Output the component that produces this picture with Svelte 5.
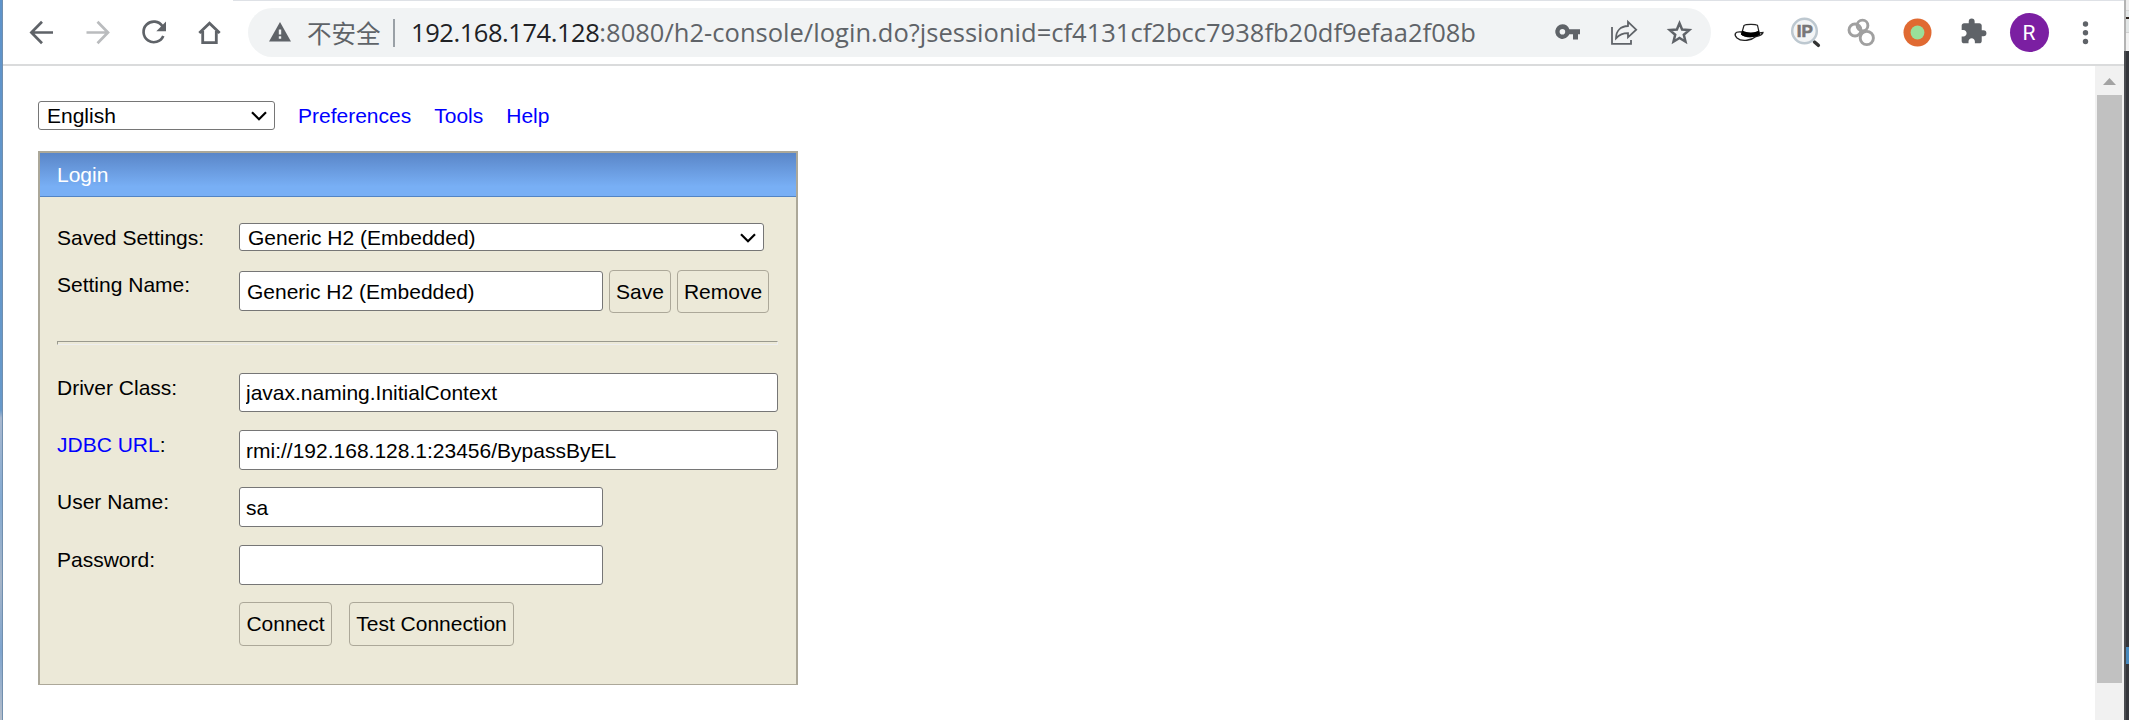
<script>
  let language = $state('English');
  let saved = $state('Generic H2 (Embedded)');
  let settingName = $state('Generic H2 (Embedded)');
  let driver = $state('javax.naming.InitialContext');
  let url = $state('rmi://192.168.128.1:23456/BypassByEL');
  let user = $state('sa');
  let password = $state('');
</script>

{#snippet chevron()}
  <svg class="chevron" width="16" height="10" viewBox="0 0 16 10"><path d="M1 1.2 8 8.2 15 1.2" fill="none" stroke="#000" stroke-width="2.2" /></svg>
{/snippet}

<div class="screen">
  <div class="edge-left"></div>
  <div class="window">
    <header class="toolbar">
      <div class="tab-line"></div>
      <svg class="cell" viewBox="0 0 56 64"><path d="M39 32.5H18M28 21.8 17.4 32.5 28 43.2" fill="none" stroke="#5f6368" stroke-width="2.7" /></svg>
      <svg class="cell" viewBox="0 0 56 64"><path d="M16.500 32.500H37.500M27.500 21.800 38 32.500 27.500 43.200" fill="none" stroke="#babcbe" stroke-width="2.7" /></svg>
      <svg class="cell" viewBox="0 0 56 64"><path d="M36.500 26.300A10.300 10.300 0 1 0 37.300 36" fill="none" stroke="#5f6368" stroke-width="2.7" /><path d="M40 21.500V31.200H30.300Z" fill="#5f6368" /></svg>
      <svg class="cell" viewBox="0 0 56 64"><path d="M17.300 33 27.500 23.200 37.700 33M20.700 31V42.600H34.300V31" fill="none" stroke="#5f6368" stroke-width="2.8" /></svg>
      <div class="omnibox">
        <svg class="warn" width="22" height="20" viewBox="0 0 22 20"><path d="M11 0 22 19.500H0Z" fill="#5f6368" /><path d="M9.800 7.500h2.400v5H9.800zM9.800 14.300h2.400v2.500H9.800z" fill="#f1f3f4" /></svg>
        <span class="insecure">不安全</span>
        <span class="bar"></span>
        <span class="address"><span class="host">192.168.174.128</span><span class="path">:8080/h2-console/login.do?jsessionid=cf4131cf2bcc7938fb20df9efaa2f08b</span></span>
        <svg class="pill-cell" viewBox="0 8 56 49"><path fill="#5f6368" fill-rule="evenodd" d="M22.400 24.300a7.300 7.300 0 1 0 6.900 10H33V39.500h5V34.300h2V29.200H29.300a7.300 7.300 0 0 0-6.900-4.900ZM22.400 28.900a2.800 2.800 0 1 1 0 5.600a2.800 2.800 0 0 1 0-5.600Z" /></svg>
        <svg class="pill-cell" viewBox="0 8 56 49"><path d="M16 27V43.800H35V40M20 38.300C20 30.500 25 26.300 32 26V21.800L40.200 29.700 32 37.300V33.200C27 33.200 23.500 34.500 20 38.300Z" fill="none" stroke="#5f6368" stroke-width="1.800" /></svg>
        <svg class="pill-cell" viewBox="0 8 56 49"><path d="M27.500 23.200 30.100 29.500 37.200 30.100 31.800 34.700 33.500 41.700 27.500 38 21.500 41.700 23.200 34.700 17.800 30.100 24.900 29.500Z" fill="none" stroke="#5f6368" stroke-width="2.500" /></svg>
      </div>
      <svg class="cell first-ext" viewBox="0 0 56 64">
        <path d="M20 32C12 31 12 35 15 38C20 42.500 30 40 34 36.500C38 36 41 34 41 32.500L37 32.800" fill="#fff" stroke="#222" stroke-width="1.300" />
        <path d="M19.500 34 22 25.500C24 24.200 33 24 35.500 25.300L37.500 34C33 37.500 23 37.500 19.500 34Z" fill="#fff" stroke="#222" stroke-width="1.200" />
        <path d="M20.200 30.500C25 33 33 33 36.700 30.500L38 34.500C33 38 23 38 19 34.500Z" fill="#000" />
      </svg>
      <svg class="cell" viewBox="0 0 56 64">
        <path d="M36.500 42 40.300 45.300" stroke="#333" stroke-width="3.500" stroke-linecap="round" />
        <circle cx="26.500" cy="31" r="12.300" fill="#f3f5f6" stroke="#bdc8d0" stroke-width="2.500" />
        <text x="26.800" y="37.300" text-anchor="middle" font-family="Liberation Sans, sans-serif" font-weight="bold" font-size="17" fill="#777" stroke="#777" stroke-width=".6">IP</text>
      </svg>
      <svg class="cell" viewBox="0 0 56 64"><g fill="none" stroke="#a0a0a0" stroke-width="2.900"><circle cx="28.500" cy="25.500" r="5.400" /><circle cx="21" cy="30" r="6" /><circle cx="32.800" cy="38" r="6.600" /></g></svg>
      <svg class="cell" viewBox="0 0 56 64"><circle cx="27.500" cy="32.500" r="14" fill="#e06a32" /><circle cx="27.500" cy="32.500" r="6.900" fill="#9adf9a" /></svg>
      <svg class="cell" viewBox="0 0 56 64"><path transform="translate(13.300 17.300) scale(1.180)" fill="#5f6368" d="M20.500 11H19V7c0-1.100-.9-2-2-2h-4V3.500a2.500 2.500 0 0 0-5 0V5H4c-1.100 0-1.990.9-1.990 2v3.800H3.500c1.490 0 2.700 1.210 2.700 2.700s-1.210 2.700-2.700 2.700H2V20c0 1.100.9 2 2 2h3.800v-1.500c0-1.490 1.210-2.700 2.700-2.700s2.700 1.210 2.700 2.700V22H17c1.100 0 2-.9 2-2v-4h1.500a2.500 2.500 0 0 0 0-5Z" /></svg>
      <div class="avatar-cell"><span class="avatar">R</span></div>
      <svg class="cell" viewBox="0 0 56 64"><g fill="#5f6368"><circle cx="27.500" cy="24" r="2.700" /><circle cx="27.500" cy="32.800" r="2.700" /><circle cx="27.500" cy="41.500" r="2.700" /></g></svg>
    </header>

    <div class="view">
      <main>
        <nav>
          <span class="select lang"><select bind:value={language}><option>English</option></select>{@render chevron()}</span>
          <span class="link prefs">Preferences</span>
          <span class="link tools">Tools</span>
          <span class="link">Help</span>
        </nav>
        <form class="panel">
          <div class="title">Login</div>
          <div class="body">
            <div class="row saved">
              <label for="saved">Saved Settings:</label>
              <span class="select wide"><select id="saved" bind:value={saved}><option>Generic H2 (Embedded)</option></select>{@render chevron()}</span>
            </div>
            <div class="row name">
              <label for="name">Setting Name:</label>
              <div class="group">
                <input id="name" class="short" bind:value={settingName} />
                <button type="button" class="save">Save</button>
                <button type="button" class="remove">Remove</button>
              </div>
            </div>
            <hr />
            <div class="row driver"><label for="driver">Driver Class:</label><input id="driver" bind:value={driver} /></div>
            <div class="row url"><label for="url"><span class="link">JDBC URL</span>:</label><input id="url" bind:value={url} /></div>
            <div class="row user"><label for="user">User Name:</label><input id="user" class="short" bind:value={user} /></div>
            <div class="row pass"><label for="pass">Password:</label><input id="pass" class="short" type="password" bind:value={password} /></div>
            <div class="row actions">
              <span></span>
              <div class="group">
                <button type="button" class="connect">Connect</button>
                <button type="button" class="test">Test Connection</button>
              </div>
            </div>
          </div>
        </form>
      </main>
      <div class="scrollbar">
        <svg width="13" height="7" viewBox="0 0 13 7"><path d="M0 7 6.500 0 13 7Z" fill="#a3a3a3" /></svg>
        <div class="thumb"></div>
      </div>
    </div>
  </div>
  <div class="edge-right"><div class="border"></div><div class="behind"></div></div>
</div>

<style>
  :global(body) { margin: 0; overflow: hidden; background: #fff; }
  .screen { display: flex; width: 2129px; height: 720px; overflow: hidden; font: 21px/24px "Liberation Sans", Arial, sans-serif; color: #000; }
  .edge-left { box-sizing: border-box; width: 3px; border-right: 1px solid #718fae; background: linear-gradient(#5e93ca 0, #6799ca 410px, #a8b8cf 418px, #83aad2 500px, #a6b5c8 580px, #7fa5cf 650px, #b5bdc9 720px); }
  .window { width: 2121px; display: flex; flex-direction: column; background: #fff; }
  .toolbar { position: relative; box-sizing: border-box; height: 66px; flex: none; padding-left: 11px; display: flex; border-bottom: 2px solid #dadbdc; }
  .tab-line { position: absolute; top: 0; left: 230px; right: 0; height: 1px; background: #dee1e6; }
  .cell { width: 56px; height: 64px; flex: none; display: block; }
  .omnibox { box-sizing: border-box; width: 1463px; height: 49px; margin: 8px 0 0 10px; padding-left: 21px; border-radius: 25px; background: #f1f3f4; display: flex; align-items: center; flex: none; color: #5f6368; }
  .warn { flex: none; margin-bottom: 1px; }
  .insecure { width: 85px; margin-left: 16px; font: 24.500px/40px "Noto Sans CJK SC", sans-serif; white-space: nowrap; }
  .bar { width: 2px; height: 28px; margin: 0 16px 0 1px; background: #9aa0a6; }
  .address { width: 1129px; flex: none; margin-bottom: 1px; font: 25.500px/40px "Open Sans", "Noto Sans", sans-serif; white-space: nowrap; }
  .host { color: #202124; letter-spacing: -0.450px; }
  .path { letter-spacing: 0.020px; }
  .pill-cell { width: 56px; height: 49px; flex: none; }
  .first-ext { margin-left: 11px; }
  .avatar-cell { width: 56px; height: 64px; padding: 13px 0 0 8px; box-sizing: border-box; flex: none; }
  .avatar { display: block; width: 39px; height: 39px; border-radius: 50%; background: #7b1fa2; color: #fff; font: 21px/41px Roboto, sans-serif; text-align: center; text-indent: -1px; }
  .view { flex: 1; display: flex; }
  main { flex: 1; padding: 35px 0 0 35px; }
  nav { display: flex; height: 29px; align-items: center; }
  .link { color: #00f; }
  nav .link { margin-right: 23px; }
  nav .prefs { margin-left: 23px; }
  .select { position: relative; display: block; height: 28px; }
  .lang { width: 237px; height: 29px; }
  .wide { width: 525px; }
  select { appearance: none; box-sizing: border-box; display: block; width: 100%; height: 100%; margin: 0; padding: 0 8px; font: inherit; color: #000; background: #fff; border: 1px solid #767676; border-radius: 3px; }
  .wide select { padding-top: 1px; }
  .chevron { position: absolute; right: 8px; top: 10px; }
  .panel { box-sizing: border-box; width: 760px; height: 534px; margin-top: 21px; border: 2px solid #aca899; border-bottom-width: 1px; background: #ece9d8; }
  .title { box-sizing: border-box; height: 44px; padding: 10px 17px 0; color: #fff; background: linear-gradient(#5a86c8, #78aff5 78%); border-bottom: 1px solid #5284c4; }
  .body { padding: 0 18px 0 17px; }
  .row { display: grid; grid-template-columns: 182px 1fr; align-items: start; }
  label { margin-top: 3px; display: block; }
  .saved { height: 28px; margin-top: 26px; }
  .name { height: 43px; margin-top: 19px; }
  .group { display: flex; align-items: flex-start; }
  input { box-sizing: border-box; width: 539px; height: 40px; margin: 0; padding: 1px 6px 0; font: inherit; color: #000; background: #fff; border: 1px solid #767676; border-radius: 3px; outline: 0; }
  input.short { width: 364px; }
  .name input { margin: 1px 6px 0 0; padding-left: 7px; }
  button { box-sizing: border-box; height: 43px; margin: 0; padding: 0; font: inherit; color: #000; background: #ece9d8; border: 1px solid #aca899; border-radius: 4px; white-space: nowrap; }
  .save { width: 62px; margin-right: 6px; }
  .remove { width: 92px; }
  hr { box-sizing: border-box; height: 4px; width: 721px; margin: 28px 0 0; border: 1px solid; border-color: #9a9a8e #eee #eee #9a9a8e; }
  .driver { height: 39px; margin-top: 28px; }
  .driver input { height: 39px; }
  .url { height: 40px; margin-top: 18px; }
  .user { height: 40px; margin-top: 17px; }
  .pass { height: 40px; margin-top: 18px; }
  .actions { margin-top: 17px; }
  .actions button { height: 44px; }
  .connect { width: 93px; margin-right: 17px; }
  .test { width: 165px; }
  .scrollbar { width: 29px; background: #f1f1f1; display: flex; flex-direction: column; align-items: center; }
  .scrollbar svg { margin: 12px 0 10px; flex: none; }
  .thumb { width: 25px; height: 588px; background: #c1c1c1; }
  .edge-right { width: 5px; display: flex; }
  .border { width: 2px; background: linear-gradient(#b3b3b3 51px, #4a4c50 51px); }
  .behind { width: 3px; background: linear-gradient(#ededed 0 10px, #d6d6d6 10px 11px, #e3e7e7 11px 17px, #2b211c 17px 19px, #e1e5e5 19px 32px, #d0d0d0 32px 33px, #f2f2f2 33px 51px, #34363b 51px 647px, #4789bd 647px 664px, #34363b 664px); }
</style>
